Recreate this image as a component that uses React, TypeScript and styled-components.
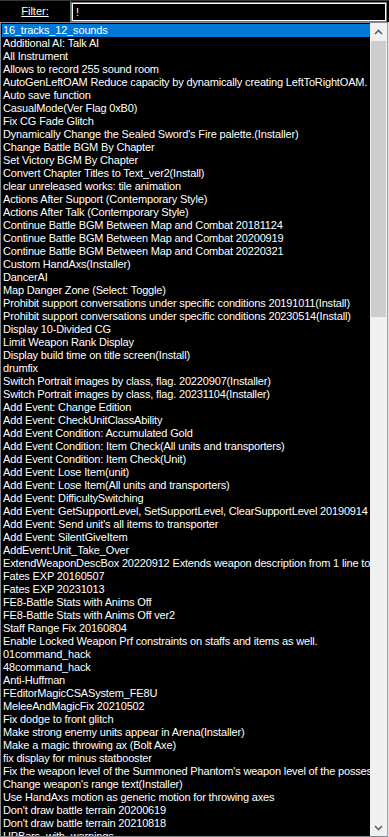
import {createGlobalStyle} from 'styled-components'
import styled from 'styled-components'

const items = [
  '16_tracks_12_sounds',
  'Additional AI: Talk AI',
  'All Instrument',
  'Allows to record 255 sound room',
  'AutoGenLeftOAM Reduce capacity by dynamically creating LeftToRightOAM.',
  'Auto save function',
  'CasualMode(Ver Flag 0xB0)',
  'Fix CG Fade Glitch',
  "Dynamically Change the Sealed Sword's Fire palette.(Installer)",
  'Change Battle BGM By Chapter',
  'Set Victory BGM By Chapter',
  'Convert Chapter Titles to Text_ver2(Install)',
  'clear unreleased works: tile animation',
  'Actions After Support (Contemporary Style)',
  'Actions After Talk (Contemporary Style)',
  'Continue Battle BGM Between Map and Combat 20181124',
  'Continue Battle BGM Between Map and Combat 20200919',
  'Continue Battle BGM Between Map and Combat 20220321',
  'Custom HandAxs(Installer)',
  'DancerAI',
  'Map Danger Zone (Select: Toggle)',
  'Prohibit support conversations under specific conditions 20191011(Install)',
  'Prohibit support conversations under specific conditions 20230514(Install)',
  'Display 10-Divided CG',
  'Limit Weapon Rank Display',
  'Display build time on title screen(Install)',
  'drumfix',
  'Switch Portrait images by class, flag. 20220907(Installer)',
  'Switch Portrait images by class, flag. 20231104(Installer)',
  'Add Event: Change Edition',
  'Add Event: CheckUnitClassAbility',
  'Add Event Condition: Accumulated Gold',
  'Add Event Condition: Item Check(All units and transporters)',
  'Add Event Condition: Item Check(Unit)',
  'Add Event: Lose Item(unit)',
  'Add Event: Lose Item(All units and transporters)',
  'Add Event: DifficultySwitching',
  'Add Event: GetSupportLevel, SetSupportLevel, ClearSupportLevel 20190914',
  "Add Event: Send unit's all items to transporter",
  'Add Event: SilentGiveItem',
  'AddEvent:Unit_Take_Over',
  'ExtendWeaponDescBox 20220912 Extends weapon description from 1 line to 2 lines',
  'Fates EXP 20160507',
  'Fates EXP 20231013',
  'FE8-Battle Stats with Anims Off',
  'FE8-Battle Stats with Anims Off ver2',
  'Staff Range Fix 20160804',
  'Enable Locked Weapon Prf constraints on staffs and items as well.',
  '01command_hack',
  '48command_hack',
  'Anti-Huffman',
  'FEditorMagicCSASystem_FE8U',
  'MeleeAndMagicFix 20210502',
  'Fix dodge to front glitch',
  'Make strong enemy units appear in Arena(Installer)',
  'Make a magic throwing ax (Bolt Axe)',
  'fix display for minus statbooster',
  "Fix the weapon level of the Summoned Phantom's weapon level of the possessed unit",
  "Change weapon's range text(Installer)",
  'Use HandAxs motion as generic motion for throwing axes',
  "Don't draw battle terrain 20200619",
  "Don't draw battle terrain 20210818",
  'HPBars_with_warnings',
]

const GlobalStyle = createGlobalStyle`
  html, body {
    margin: 0;
    padding: 0;
    background: #000;
  }
  * {
    box-sizing: border-box;
  }
`

const Window = styled.div`
  width: 389px;
  height: 837px;
  display: flex;
  flex-direction: column;
  background: #000;
  color: #fff;
  font-family: 'Liberation Sans', Arial, sans-serif;
  font-size: 11px;
  letter-spacing: -0.16px;
  overflow: hidden;
`

const FilterBar = styled.div`
  height: 22px;
  display: flex;
  flex-shrink: 0;
  border-top: 1px solid #3a3a3a;
`

const FilterLabel = styled.label`
  width: 71px;
  display: flex;
  align-items: center;
  justify-content: center;
  border-right: 1px solid #6a6a6a;
  text-decoration: underline;
  padding-bottom: 1px;
  letter-spacing: 0;
`

const FilterBox = styled.input`
  margin: 2px 3px 0 1px;
  height: 18px;
  flex: 1;
  background: #000;
  color: #fff;
  border: 1px solid #fff;
  outline: 1px solid #7a7a7a;
  font: inherit;
  padding: 0 3px;
`

const ListBox = styled.div`
  flex: 1;
  min-height: 0;
  width: 388px;
  display: flex;
  border: 1px solid #828790;
  border-right-color: #a0a0a0;
  box-shadow: 1px 0 0 #e3e3e3;
`

const Rows = styled.div`
  flex: 1;
  min-width: 0;
  padding: 1px 0 0 1px;
  overflow: hidden;
`

const Row = styled.div<{$selected?: boolean}>`
  height: 13px;
  line-height: 13px;
  padding-left: 1px;
  white-space: nowrap;
  overflow: hidden;
  background: ${p => (p.$selected ? '#0078d7' : 'transparent')};
`

const ScrollBar = styled.div`
  width: 17px;
  flex-shrink: 0;
  display: flex;
  flex-direction: column;
  background: #f0f0f0;
`

const ScrollButton = styled.div`
  height: 17px;
  display: flex;
  align-items: center;
  justify-content: center;
  flex-shrink: 0;
`

const Track = styled.div`
  flex: 1;
  padding-top: 1px;
`

const Thumb = styled.div`
  height: 276px;
  margin: 0 1px;
  background: #cdcdcd;
`

const Chevron = ({down}: {down?: boolean}) => (
  <svg width="9" height="6" viewBox="0 0 9 6">
    <polyline
      points={down ? '1,1 4.5,4.5 8,1' : '1,5 4.5,1.5 8,5'}
      fill="none"
      stroke="#606060"
      strokeWidth="1.6"
    />
  </svg>
)

export default function App() {
  return (
    <Window>
      <GlobalStyle />
      <FilterBar>
        <FilterLabel htmlFor="filter">Filter:</FilterLabel>
        <FilterBox id="filter" defaultValue="!" />
      </FilterBar>
      <ListBox>
        <Rows>
          {items.map((item, i) => (
            <Row key={i} $selected={i === 0}>
              {item}
            </Row>
          ))}
        </Rows>
        <ScrollBar>
          <ScrollButton>
            <Chevron />
          </ScrollButton>
          <Track>
            <Thumb />
          </Track>
          <ScrollButton>
            <Chevron down />
          </ScrollButton>
        </ScrollBar>
      </ListBox>
    </Window>
  )
}
